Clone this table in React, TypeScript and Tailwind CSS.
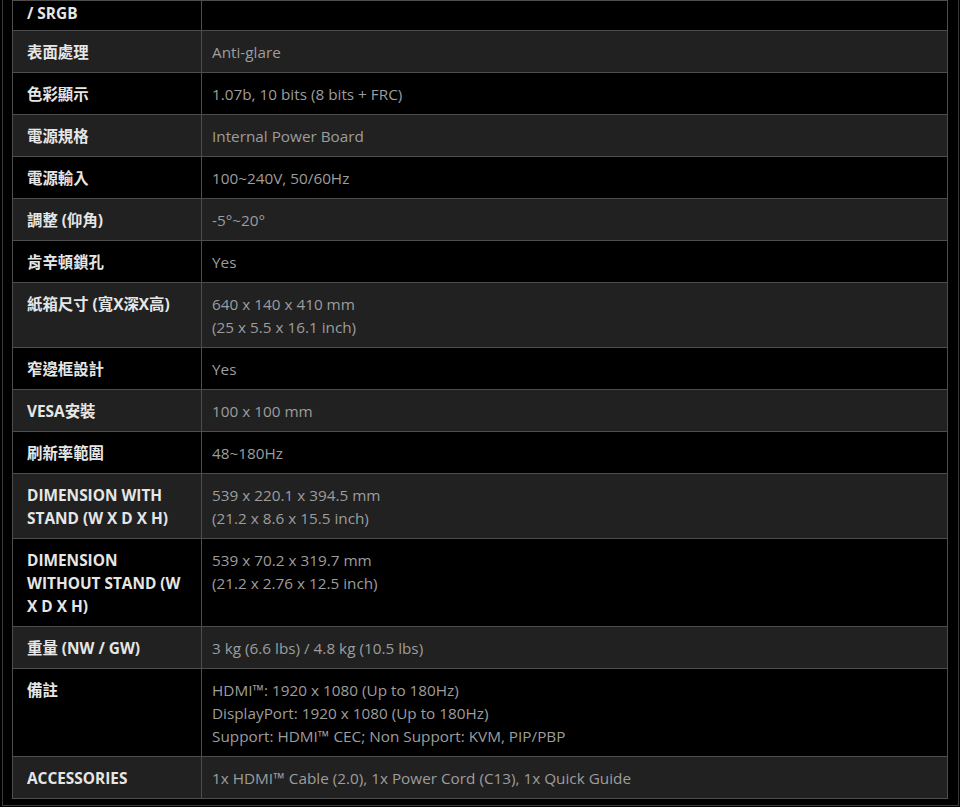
import React from "react";

type Row = { label: React.ReactNode; value: React.ReactNode };

const rows: Row[] = [
  { label: "表面處理", value: "Anti-glare" },
  { label: "色彩顯示", value: "1.07b, 10 bits (8 bits + FRC)" },
  { label: "電源規格", value: "Internal Power Board" },
  { label: "電源輸入", value: "100~240V, 50/60Hz" },
  { label: "調整 (仰角)", value: "-5°~20°" },
  { label: "肯辛頓鎖孔", value: "Yes" },
  {
    label: "紙箱尺寸 (寬X深X高)",
    value: (
      <>
        640 x 140 x 410 mm
        <br />
        (25 x 5.5 x 16.1 inch)
      </>
    ),
  },
  { label: "窄邊框設計", value: "Yes" },
  { label: "VESA安裝", value: "100 x 100 mm" },
  { label: "刷新率範圍", value: "48~180Hz" },
  {
    label: (
      <>
        DIMENSION WITH
        <br />
        STAND (W X D X H)
      </>
    ),
    value: (
      <>
        539 x 220.1 x 394.5 mm
        <br />
        (21.2 x 8.6 x 15.5 inch)
      </>
    ),
  },
  {
    label: (
      <>
        DIMENSION
        <br />
        WITHOUT STAND (W
        <br />X D X H)
      </>
    ),
    value: (
      <>
        539 x 70.2 x 319.7 mm
        <br />
        (21.2 x 2.76 x 12.5 inch)
      </>
    ),
  },
  { label: "重量 (NW / GW)", value: "3 kg (6.6 lbs) / 4.8 kg (10.5 lbs)" },
  {
    label: "備註",
    value: (
      <>
        HDMI™: 1920 x 1080 (Up to 180Hz)
        <br />
        DisplayPort: 1920 x 1080 (Up to 180Hz)
        <br />
        Support: HDMI™ CEC; Non Support: KVM, PIP/PBP
      </>
    ),
  },
  {
    label: "ACCESSORIES",
    value: "1x HDMI™ Cable (2.0), 1x Power Cord (C13), 1x Quick Guide",
  },
];

export default function App() {
  return (
    <div
      className="w-[960px] h-[807px] bg-black overflow-hidden"
      style={{ fontFamily: '"Open Sans", "Noto Sans CJK TC", sans-serif' }}
    >
      <div className="ml-[2px] w-[957px] h-[806px] border-x border-b border-[#3a3a3a] pl-[9px] pr-[9px] pt-0 flex flex-col">
        <div className="border-x border-b border-[#4d4d4d] w-[936px]">
          <div className="flex h-[31px] border-t border-[#4d4d4d] bg-black">
            <div className="w-[189px] shrink-0 border-r border-[#4d4d4d] pl-[14px] pt-[1px] text-[15.4px] font-bold text-[#e6e6e6] leading-[23px]">
              / SRGB
            </div>
            <div className="flex-1" />
          </div>
          {rows.map((r, i) => (
            <div
              key={i}
              className={`flex border-t border-[#4d4d4d] ${i === 0 ? "-mt-[1px]" : ""} ${i % 2 === 0 ? "bg-[#212121]" : "bg-black"}`}
            >
              <div className="w-[189px] shrink-0 border-r border-[#4d4d4d] pl-[14px] pt-[10px] pb-[8px] text-[15.4px] font-bold text-[#e6e6e6] leading-[23px] whitespace-nowrap">
                {r.label}
              </div>
              <div className="flex-1 pl-[10px] pt-[10px] pb-[8px] text-[15.3px] text-[#9d9d9d] leading-[23px] whitespace-nowrap">
                {r.value}
              </div>
            </div>
          ))}
        </div>
      </div>
    </div>
  );
}
